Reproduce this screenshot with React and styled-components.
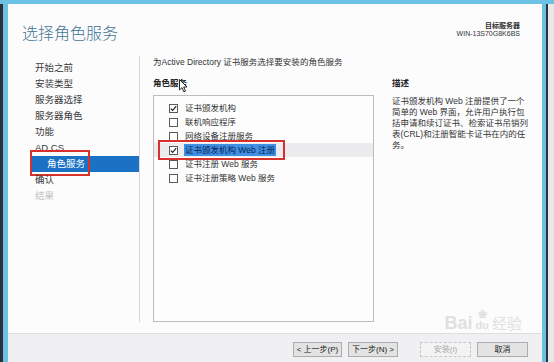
import React from 'react';
import styled, { createGlobalStyle } from 'styled-components';

const GlobalStyle = createGlobalStyle`
  html, body {
    margin: 0;
    padding: 0;
    background: #e9e9ea;
  }
  body {
    font-family: "Liberation Sans", "Noto Sans CJK SC", sans-serif;
  }
`;

const Screen = styled.div`
  width: 554px;
  height: 362px;
  display: flex;
  overflow: hidden;
  background: #e9e9ea;
`;

const Edge = styled.div`
  width: ${p => p.$w}px;
  flex-shrink: 0;
  background: ${p => p.$bg};
  border-top: 4px solid #6cc2e4;
`;

const Window = styled.div`
  width: 543px;
  flex-shrink: 0;
  box-sizing: border-box;
  display: flex;
  flex-direction: column;
  border-top: 4px solid #6cc2e4;
  border-left: 5px solid #6cc2e4;
  border-right: 4px solid #6cc2e4;
  background: #fcfcfd;
  position: relative;
`;

const Header = styled.div`
  height: 52px;
  flex-shrink: 0;
  display: flex;
  justify-content: space-between;
  align-items: flex-start;
  padding: 0 22px 0 14px;
`;

const Title = styled.div`
  margin-top: 18px;
  font-family: "Noto Sans CJK SC", sans-serif;
  font-size: 16px;
  line-height: 20px;
  font-weight: 300;
  color: #3f7594;
`;

const ServerInfo = styled.div`
  margin-top: 18px;
  text-align: right;
  font-size: 7px;
  line-height: 8px;
  color: #333;
`;

const ServerLabel = styled.div`
  font-weight: 700;
`;

const Body = styled.div`
  flex: 1;
  display: flex;
  padding-bottom: 11px;
  min-height: 0;
`;

const Nav = styled.div`
  width: 132px;
  box-sizing: border-box;
  border-right: 1px solid #d8d8d8;
  padding-top: 4px;
  flex-shrink: 0;
`;

const NavItem = styled.div`
  position: relative;
  height: 16px;
  line-height: 16px;
  font-size: 9.5px;
  padding-left: ${p => (p.$active ? 15 : 27)}px;
  margin-left: ${p => (p.$active ? 24 : 0)}px;
  color: ${p => (p.$active ? '#ffffff' : p.$muted ? '#c4c4c4' : '#3a3a3a')};
  background: ${p => (p.$active ? '#1b71c4' : 'transparent')};
`;

const NavMark = styled.div`
  position: absolute;
  left: -2px;
  top: -6px;
  width: 60px;
  height: 26px;
  box-sizing: border-box;
  border: 2px solid #d8312c;
`;

const Main = styled.div`
  flex: 1;
  display: flex;
  flex-direction: column;
  padding-left: 13px;
  min-width: 0;
`;

const Intro = styled.div`
  font-size: 8.5px;
  line-height: 13px;
  color: #333;
  white-space: nowrap;
`;

const Columns = styled.div`
  flex: 1;
  display: flex;
  min-height: 0;
`;

const ListColumn = styled.div`
  width: 221px;
  display: flex;
  flex-direction: column;
`;

const SectionHead = styled.div`
  position: relative;
  margin-top: 8px;
  font-size: 8.5px;
  line-height: 12px;
  font-weight: 700;
  color: #222;
`;

const Cursor = styled.svg`
  position: absolute;
  left: 26px;
  top: 2px;
`;

const ListBox = styled.div`
  flex: 1;
  margin-top: 6px;
  padding-top: 5px;
  border: 1px solid #bdbdbd;
  background: #fdfdfd;
`;

const Row = styled.div`
  position: relative;
  height: 14px;
  display: flex;
  align-items: center;
  gap: 6px;
  padding-left: 15px;
  font-size: 8.5px;
  color: #333;
  background: ${p => (p.$focused ? '#ececee' : 'transparent')};
`;

const Box = styled.span`
  width: 9px;
  height: 9px;
  box-sizing: border-box;
  border: 1px solid #5a5a5a;
  background: #fff;
  display: flex;
  align-items: center;
  justify-content: center;
  flex-shrink: 0;
`;

const Label = styled.span`
  line-height: 12px;
  padding: 0 1px;
  background: ${p => (p.$selected ? '#3f8fe4' : 'transparent')};
  color: ${p => (p.$selected ? '#0b2350' : '#333')};
`;

const RowMark = styled.div`
  position: absolute;
  left: 4px;
  top: -3px;
  width: 127px;
  height: 20px;
  box-sizing: border-box;
  border: 2px solid #d8312c;
`;

const DescColumn = styled.div`
  margin-left: 18px;
`;

const DescText = styled.div`
  margin-top: 7px;
  font-size: 8.5px;
  line-height: 11px;
  color: #333;
  white-space: nowrap;
`;

const Footer = styled.div`
  height: 29px;
  flex-shrink: 0;
  box-sizing: border-box;
  border-top: 1px solid #dedede;
  background: #f0eff1;
  display: flex;
  justify-content: flex-end;
  align-items: flex-start;
  padding: 8px 14px 0 0;
`;

const Button = styled.div`
  width: ${p => p.$w || 50}px;
  height: 15px;
  box-sizing: border-box;
  margin-left: ${p => p.$gap || 6}px;
  font-size: 8px;
  line-height: 13px;
  text-align: center;
  color: ${p => (p.$disabled ? '#a8a8a8' : '#222')};
  background: ${p => (p.$disabled ? '#f3f3f3' : '#e3e3e3')};
  border: 1px ${p => (p.$disabled ? 'dashed #c8c8c8' : 'solid #adadad')};
`;

const Watermark = styled.div`
  position: absolute;
  right: 20px;
  bottom: 31px;
  display: flex;
  align-items: flex-end;
  gap: 3px;
  color: #e0e0e0;
  font-family: "Liberation Sans", sans-serif;
  font-weight: 700;
  pointer-events: none;
`;

const WmLetters = styled.span`
  font-size: 18px;
  line-height: 16px;
`;

const WmPaw = styled.span`
  display: flex;
  flex-direction: column;
  align-items: center;
  font-size: 11px;
  line-height: 11px;
`;

const WmCjk = styled.span`
  font-family: "Noto Sans CJK SC", sans-serif;
  font-size: 15px;
  line-height: 16px;
  font-weight: 400;
`;

const navItems = [
  { text: '开始之前' },
  { text: '安装类型' },
  { text: '服务器选择' },
  { text: '服务器角色' },
  { text: '功能' },
  { text: 'AD CS' },
  { text: '角色服务', active: true },
  { text: '确认' },
  { text: '结果', muted: true },
];

const services = [
  { text: '证书颁发机构', checked: true },
  { text: '联机响应程序' },
  { text: '网络设备注册服务' },
  { text: '证书颁发机构 Web 注册', checked: true, selected: true },
  { text: '证书注册 Web 服务' },
  { text: '证书注册策略 Web 服务' },
];

const descLines = [
  '证书颁发机构 Web 注册提供了一个',
  '简单的 Web 界面，允许用户执行包',
  '括申请和续订证书、检索证书吊销列',
  '表(CRL)和注册智能卡证书在内的任',
  '务。',
];

function Check() {
  return (
    <svg width="7" height="7" viewBox="0 0 7 7">
      <path d="M0.8 3.6 L2.7 5.4 L6.2 1.2" fill="none" stroke="#222" strokeWidth="1.2" />
    </svg>
  );
}

export default function App() {
  return (
    <Screen>
      <GlobalStyle />
      <Edge $w={3} $bg="#2b323b" />
      <Window>
        <Header>
          <Title>选择角色服务</Title>
          <ServerInfo>
            <ServerLabel>目标服务器</ServerLabel>
            <div>WIN-13S70G8K6BS</div>
          </ServerInfo>
        </Header>
        <Body>
          <Nav>
            {navItems.map(item => (
              <NavItem key={item.text} $active={item.active} $muted={item.muted}>
                {item.text}
                {item.active && <NavMark />}
              </NavItem>
            ))}
          </Nav>
          <Main>
            <Intro>为Active Directory 证书服务选择要安装的角色服务</Intro>
            <Columns>
              <ListColumn>
                <SectionHead>
                  角色服务
                  <Cursor width="9" height="14" viewBox="0 0 9 14">
                    <path d="M0.5 0.5 L0.5 11 L3 8.6 L4.8 12.8 L6.4 12.1 L4.7 8 L8 8 Z" fill="#fff" stroke="#111" strokeWidth="0.9" />
                  </Cursor>
                </SectionHead>
                <ListBox>
                  {services.map(s => (
                    <Row key={s.text} $focused={s.selected}>
                      <Box>{s.checked && <Check />}</Box>
                      <Label $selected={s.selected}>{s.text}</Label>
                      {s.selected && <RowMark />}
                    </Row>
                  ))}
                </ListBox>
              </ListColumn>
              <DescColumn>
                <SectionHead>描述</SectionHead>
                <DescText>
                  {descLines.map(line => (
                    <div key={line}>{line}</div>
                  ))}
                </DescText>
              </DescColumn>
            </Columns>
          </Main>
        </Body>
        <Footer>
          <Button $w={49}>&lt; 上一步(P)</Button>
          <Button>下一步(N) &gt;</Button>
          <Button $w={51} $gap={22} $disabled>安装(I)</Button>
          <Button $w={51}>取消</Button>
        </Footer>
        <Watermark>
          <WmLetters>Bai</WmLetters>
          <WmPaw>
            <span>❀</span>
            <span>du</span>
          </WmPaw>
          <WmCjk>经验</WmCjk>
        </Watermark>
      </Window>
      <Edge $w={2} $bg="#2b323b" />
      <Edge $w={6} $bg="#e8e8e9" />
    </Screen>
  );
}
